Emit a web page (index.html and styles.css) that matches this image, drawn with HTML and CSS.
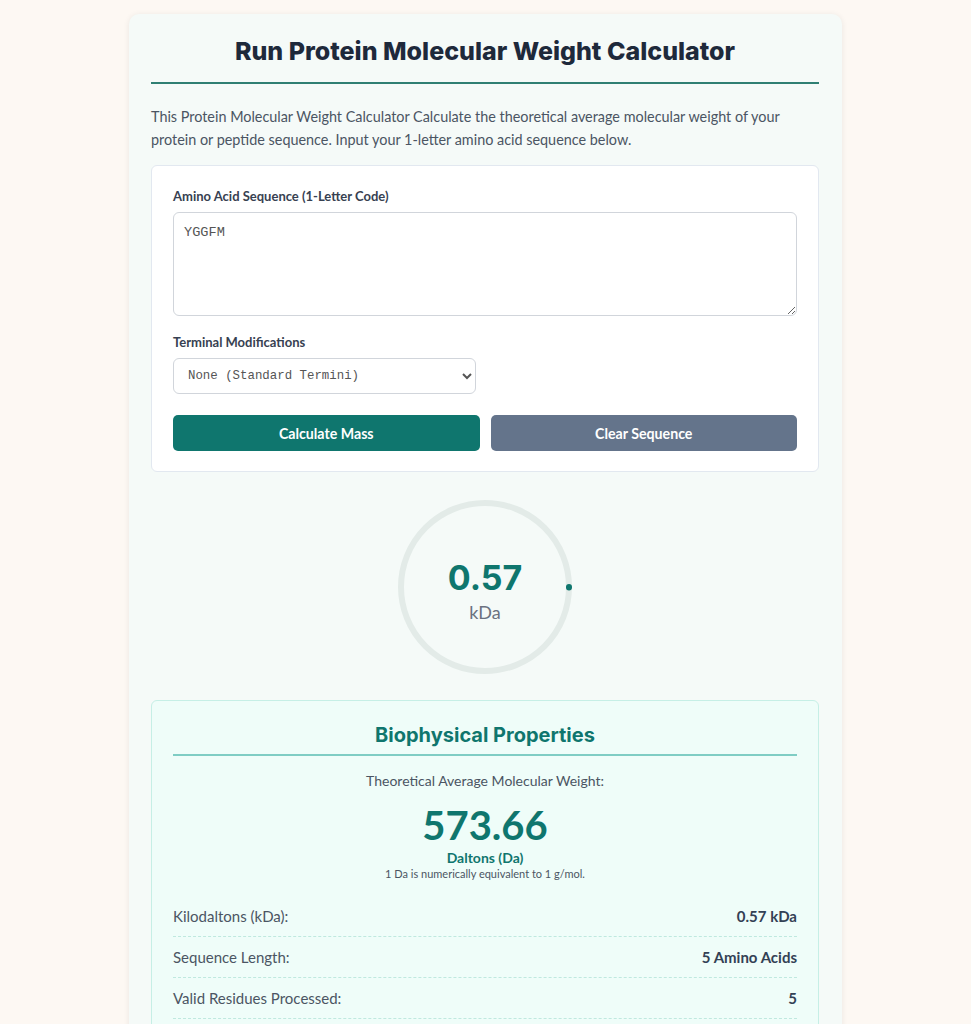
FILE: index.html
```html
<!DOCTYPE html>
<html lang="en">
<head>
  <meta charset="UTF-8">
  <title>Protein Molecular Weight Calculator</title>
  <link rel="stylesheet" href="styles.css">
</head>
<body>

  <div class="card">
    <h1>Run Protein Molecular Weight Calculator</h1>

    <p class="intro">This Protein Molecular Weight Calculator Calculate the theoretical average molecular weight of your protein or peptide sequence. Input your 1-letter amino acid sequence below.</p>

    <div class="panel">
      <label class="field-label" for="sequence">Amino Acid Sequence (1-Letter Code)</label>
      <textarea id="sequence">YGGFM</textarea>

      <label class="field-label" for="termini">Terminal Modifications</label>
      <select id="termini">
        <option>None (Standard Termini)</option>
        <option>N-terminal Acetylation</option>
        <option>C-terminal Amidation</option>
      </select>

      <div class="actions">
        <button class="btn-primary">Calculate Mass</button>
        <button class="btn-secondary">Clear Sequence</button>
      </div>
    </div>

    <div class="gauge">
      <svg width="180" height="180" viewBox="0 0 180 180">
        <circle cx="90" cy="90" r="84" fill="none" stroke="#e3ebe8" stroke-width="6"/>
        <circle cx="90" cy="90" r="84" fill="none" stroke="#0f766e" stroke-width="6" stroke-linecap="round" stroke-dasharray="0.5 600"/>
      </svg>
      <div class="gauge-text">
        <div class="gauge-value">0.57</div>
        <div class="gauge-unit">kDa</div>
      </div>
    </div>

    <div class="results">
      <h2>Biophysical Properties</h2>
      <div class="result-label">Theoretical Average Molecular Weight:</div>
      <div class="result-value">573.66</div>
      <div class="result-unit">Daltons (Da)</div>
      <div class="result-note">1 Da is numerically equivalent to 1 g/mol.</div>

      <div class="row"><span>Kilodaltons (kDa):</span><strong>0.57 kDa</strong></div>
      <div class="row"><span>Sequence Length:</span><strong>5 Amino Acids</strong></div>
      <div class="row"><span>Valid Residues Processed:</span><strong>5</strong></div>
    </div>
  </div>

</body>
</html>
```

FILE: styles.css
```css
body {
  margin: 0;
  padding: 14px 0 40px;
  background: #fdf8f3;
  font-family: 'Lato', sans-serif;
  color: #334155;
}
.card {
  width: 668px;
  margin: 0 auto;
  background: #f5faf8;
  padding: 22px 23px 30px 22px;
  border-radius: 10px;
  box-shadow: 0 1px 6px rgba(0,0,0,0.08);
}
h1 {
  font-family: 'Inter', sans-serif;
  font-size: 25px;
  font-weight: 800;
  line-height: 30px;
  color: #1e293b;
  text-align: center;
  margin: 0;
  padding-bottom: 16px;
  border-bottom: 2px solid #2f7f73;
}
.intro {
  font-size: 14.4px;
  line-height: 23px;
  color: #4b5563;
  margin: 21px 0 14px;
}
.panel {
  background: #fff;
  border: 1px solid #e2e8f0;
  border-radius: 6px;
  padding: 22px 21px 20px;
}
.field-label {
  display: block;
  font-size: 13px;
  font-weight: 700;
  color: #374151;
  margin-bottom: 8px;
}
textarea {
  display: block;
  box-sizing: border-box;
  width: 100%;
  height: 104px;
  padding: 12px 10px;
  font-family: 'Liberation Mono', monospace;
  font-size: 13.6px;
  color: #555;
  border: 1px solid #d1d5db;
  border-radius: 6px;
  margin-bottom: 18px;
  resize: vertical;
}
select {
  display: block;
  width: 303px;
  height: 36px;
  padding: 0 10px;
  font-family: 'Liberation Mono', monospace;
  font-size: 12.4px;
  color: #555;
  background: #fff;
  border: 1px solid #d1d5db;
  border-radius: 6px;
}
.actions {
  display: flex;
  gap: 11px;
  margin-top: 21px;
}
.actions button {
  flex: 1;
  height: 36px;
  border: none;
  border-radius: 5px;
  color: #fff;
  font-family: 'Lato', sans-serif;
  font-size: 14.2px;
  font-weight: 700;
  cursor: pointer;
}
.btn-primary {
  background: #0f766e;
}
.btn-secondary {
  background: #64748b;
}
.gauge {
  position: relative;
  width: 180px;
  height: 180px;
  margin: 25px auto 23px;
}
.gauge svg {
  display: block;
}
.gauge-text {
  position: absolute;
  inset: 0;
  padding-top: 7px;
  display: flex;
  flex-direction: column;
  align-items: center;
  justify-content: center;
}
.gauge-value {
  font-family: 'Inter', sans-serif;
  font-size: 34px;
  font-weight: 700;
  color: #0f766e;
  line-height: 40px;
}
.gauge-unit {
  font-size: 18px;
  color: #6b7280;
  margin-top: 3px;
}
.results {
  background: #effdf9;
  border: 1px solid #c6efe6;
  border-radius: 6px;
  padding: 22px 21px 40px;
  text-align: center;
}
h2 {
  font-family: 'Inter', sans-serif;
  font-size: 20px;
  font-weight: 700;
  color: #0f766e;
  margin: 0 0 16px;
  padding-bottom: 7px;
  border-bottom: 2px solid #7fcdc4;
}
.result-label {
  font-size: 14px;
  color: #4b5563;
}
.result-value {
  font-family: 'Lato', sans-serif;
  font-size: 40px;
  font-weight: 700;
  color: #0f766e;
  line-height: 52px;
  margin-top: 10px;
}
.result-unit {
  font-size: 14px;
  font-weight: 700;
  color: #0f766e;
  margin-top: -2px;
}
.result-note {
  font-size: 11px;
  color: #4b5563;
  margin: 1px 0 16px;
}
.row {
  display: flex;
  justify-content: space-between;
  font-size: 15px;
  padding: 11px 0;
  border-bottom: 1px dashed #bfe9df;
  color: #4b5563;
}
.row strong {
  color: #334155;
}
```
